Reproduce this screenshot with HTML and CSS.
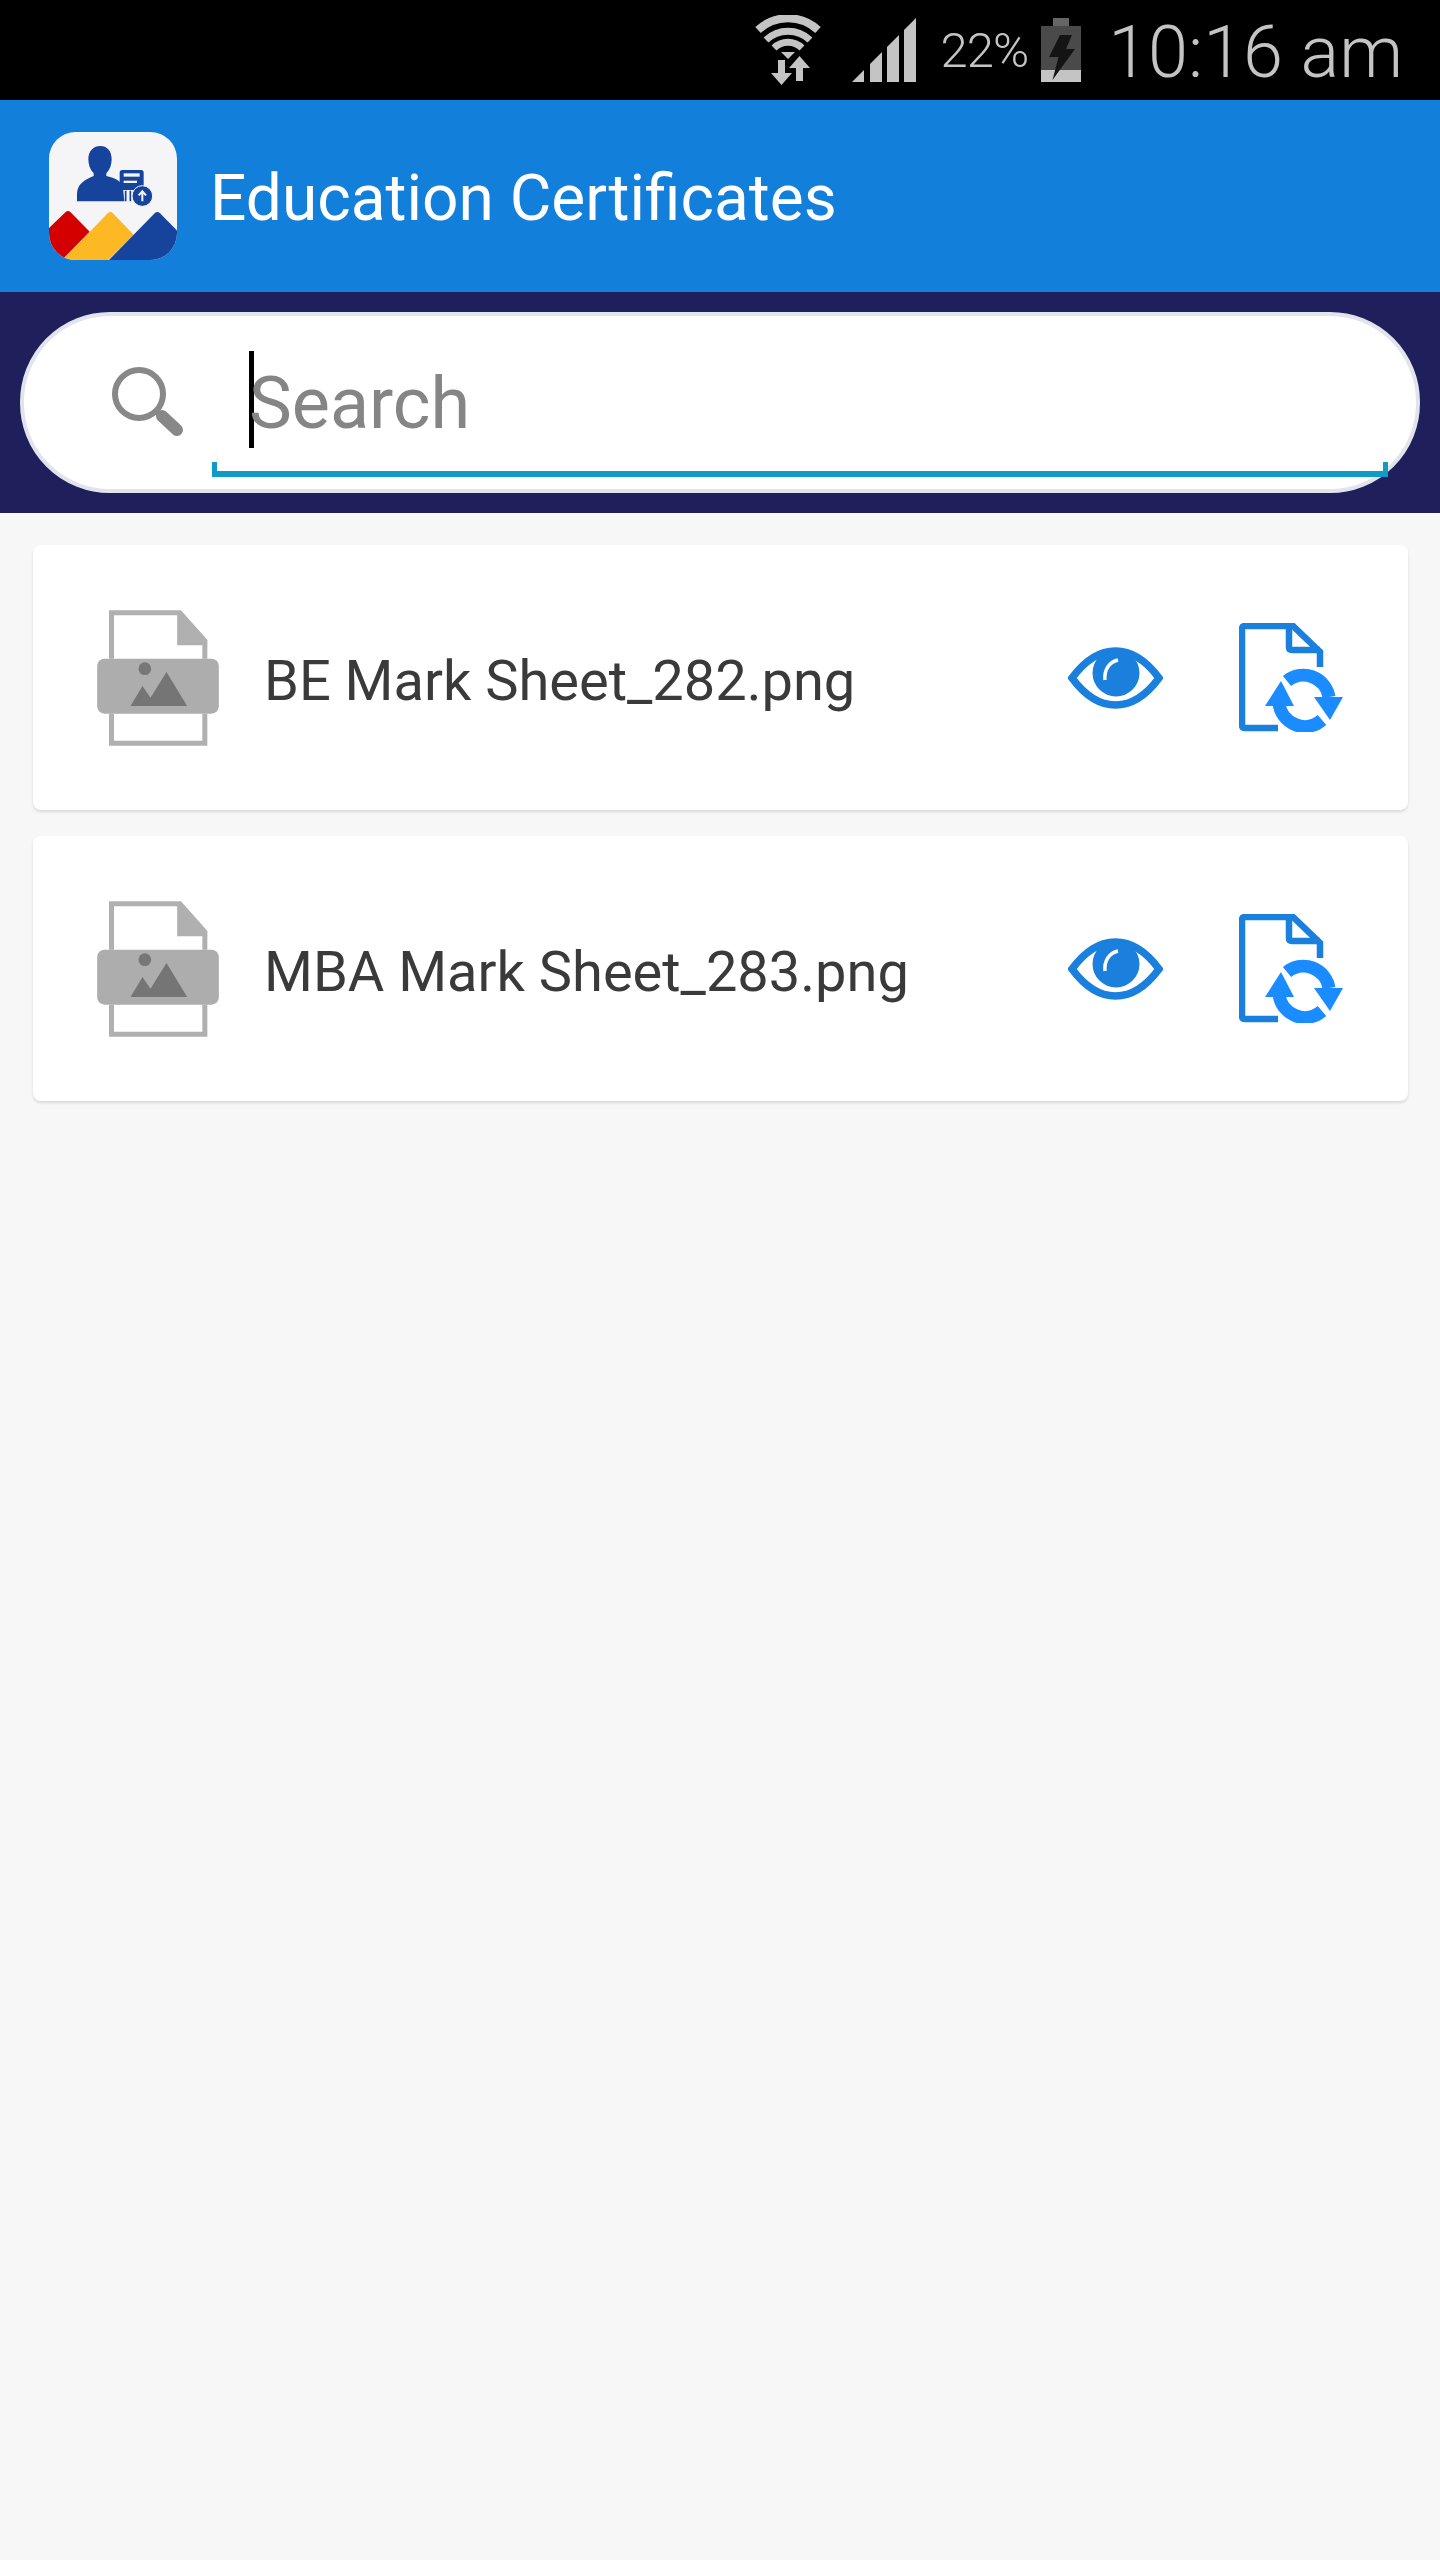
FILE: index.html
```html
<!DOCTYPE html>
<html>
    <head>
        <meta charset="UTF-8">
        <title>Education Certificates</title>
        <link rel="stylesheet" href="styles.css">
    </head>
    <body>
        <div class="statusbar">
            <svg class="wifi" viewBox="0 0 66 70">
                <path d="M3 15 A44 44 0 0 1 63 15" fill="none" stroke="#c4c4c4" stroke-width="8"/>
                <path d="M11 25 A32 32 0 0 1 55 25" fill="none" stroke="#c4c4c4" stroke-width="7"/>
                <path d="M19 33 A20 20 0 0 1 47 33" fill="none" stroke="#c4c4c4" stroke-width="7"/>
                <polygon points="26,37 40,37 33,44" fill="#c4c4c4"/>
                <path d="M23 45 H30 V58 H37 L26.500 70 L16 58 H23 Z" fill="#c4c4c4"/>
                <path d="M41 66 H48 V53 H55 L44.500 41 L34 53 H41 Z" fill="#c4c4c4"/>
            </svg>
            <svg class="signal" viewBox="0 0 64 64">
                <polygon points="0,64 12,52 12,64" fill="#c4c4c4"/>
                <polygon points="18,46 30,34 30,64 18,64" fill="#c4c4c4"/>
                <polygon points="35,29 47,17 47,64 35,64" fill="#c4c4c4"/>
                <polygon points="52,12 64,0 64,64 52,64" fill="#c4c4c4"/>
            </svg>
            <span class="battery-text">22%</span>
            <svg class="battery" viewBox="0 0 40 64">
                <rect x="12" y="0" width="16" height="8" fill="#666"/>
                <rect x="0" y="8" width="40" height="44" fill="#4a4a4a"/>
                <rect x="0" y="52" width="40" height="12" fill="#c4c4c4"/>
                <polygon points="19,17 31,17 25,31 34,31 11.500,62 17.500,39 8,39" fill="#141414"/>
            </svg>
            <span class="time">10:16 am</span>
        </div>

        <div class="appbar">
            <svg class="logo" viewBox="58 36 384 384">
                <clipPath id="logoClip"><rect x="58" y="36" width="384" height="384" rx="80"/></clipPath>
                <g clip-path="url(#logoClip)">
                    <rect x="58" y="36" width="384" height="384" fill="#f5f5f7"/>
                    <path d="M50 332 L108 276 Q115 270 122 276 L180 335 L105 412 L90 430 L50 430 Z" fill="#d40000"/>
                    <path d="M105 414 L234 280 Q242 272 250 280 L312 344 L232 424 L100 424 Z" fill="#fdb924"/>
                    <path d="M234 424 L375 280 Q383 272 391 280 L450 340 L450 424 Z" fill="#16439b"/>
                    <path d="M176 118 C176 92 192 78 212 78 C232 78 246 92 246 118 C246 135 240 150 230 160 L230 168 C252 174 276 180 280 205 L284 244 H142 L142 220 C144 190 168 178 192 168 L192 160 C182 150 176 135 176 118 Z" fill="#16439b"/>
                    <rect x="270" y="150" width="72" height="60" rx="8" fill="#16439b"/>
                    <rect x="282" y="160" width="48" height="10" fill="#f5f5f7"/>
                    <rect x="282" y="182" width="40" height="7" fill="#f5f5f7"/>
                    <path d="M288 212 V244 M302 212 V244" stroke="#16439b" stroke-width="5"/>
                    <circle cx="338" cy="228" r="31" fill="#16439b" stroke="#f5f5f7" stroke-width="3"/>
                    <path d="M338 244 V216 M327 226 L338 214 L349 226" fill="none" stroke="#f5f5f7" stroke-width="6"/>
                </g>
            </svg>
            <span class="appbar-title">Education Certificates</span>
        </div>

        <div class="searchbar">
            <div class="searchbox">
                <svg class="search-icon" viewBox="0 0 72 72">
                    <circle cx="27" cy="27" r="24" fill="none" stroke="#888" stroke-width="6"/>
                    <path d="M43 43 L50 50" stroke="#888" stroke-width="6"/>
                    <path d="M50 49 L65 63" stroke="#888" stroke-width="12" stroke-linecap="round"/>
                </svg>
                <div class="search-field">
                    <span class="caret"></span>
                    <span class="placeholder">Search</span>
                </div>
            </div>
        </div>

        <div class="list">
            <div class="card">
                <svg class="file-icon" viewBox="232 242 365 408">
                    <path d="M275 388 V250 H480 L555 335 V388 M555 553 V642 H275 V553" fill="none" stroke="#b0b0b0" stroke-width="15"/>
                    <path d="M472 246 H484 L562 332 V348 H472 Z" fill="#b0b0b0"/>
                    <rect x="232" y="388" width="365" height="165" rx="22" fill="#adadad"/>
                    <circle cx="375" cy="418" r="19" fill="#777"/>
                    <path d="M332 530 L368 470 L392 505 L440 428 L502 530 Z" fill="#757575"/>
                </svg>
                <span class="file-name">BE Mark Sheet_282.png</span>
                <svg class="eye-icon" viewBox="0 0 95 62">
                    <path d="M4 31 C18 12 32 4 47.500 4 C63 4 77 12 91 31 C77 50 63 58 47.500 58 C32 58 18 50 4 31 Z" fill="none" stroke="#1a7fdd" stroke-width="7.500"/>
                    <circle cx="48" cy="26" r="23.500" fill="#1a7fdd"/>
                    <path d="M37 33 C36 23 41 15 50 13" fill="none" stroke="#fff" stroke-width="3.500"/>
                </svg>
                <svg class="doc-icon" viewBox="0 0 104 109">
                    <path d="M39 105 H6 Q3 105 3 102 V6 Q3 3 6 3 H54 L81 29 V44" fill="none" stroke="#1a7fdd" stroke-width="6.500"/>
                    <path d="M50 3 V24 Q50 27 53 27 H81" fill="none" stroke="#1a7fdd" stroke-width="6.500"/>
                    <path d="M48 58 A26 26 0 0 1 90 74" fill="none" stroke="#1a8cff" stroke-width="13"/>
                    <polygon points="75,74 104,74 91,97" fill="#1a8cff"/>
                    <path d="M83 97 A26 26 0 0 1 40 80" fill="none" stroke="#1a8cff" stroke-width="13"/>
                    <polygon points="26,83 55,83 42,58" fill="#1a8cff"/>
                </svg>
            </div>
            <div class="card">
                <svg class="file-icon" viewBox="232 242 365 408">
                    <path d="M275 388 V250 H480 L555 335 V388 M555 553 V642 H275 V553" fill="none" stroke="#b0b0b0" stroke-width="15"/>
                    <path d="M472 246 H484 L562 332 V348 H472 Z" fill="#b0b0b0"/>
                    <rect x="232" y="388" width="365" height="165" rx="22" fill="#adadad"/>
                    <circle cx="375" cy="418" r="19" fill="#777"/>
                    <path d="M332 530 L368 470 L392 505 L440 428 L502 530 Z" fill="#757575"/>
                </svg>
                <span class="file-name">MBA Mark Sheet_283.png</span>
                <svg class="eye-icon" viewBox="0 0 95 62">
                    <path d="M4 31 C18 12 32 4 47.500 4 C63 4 77 12 91 31 C77 50 63 58 47.500 58 C32 58 18 50 4 31 Z" fill="none" stroke="#1a7fdd" stroke-width="7.500"/>
                    <circle cx="48" cy="26" r="23.500" fill="#1a7fdd"/>
                    <path d="M37 33 C36 23 41 15 50 13" fill="none" stroke="#fff" stroke-width="3.500"/>
                </svg>
                <svg class="doc-icon" viewBox="0 0 104 109">
                    <path d="M39 105 H6 Q3 105 3 102 V6 Q3 3 6 3 H54 L81 29 V44" fill="none" stroke="#1a7fdd" stroke-width="6.500"/>
                    <path d="M50 3 V24 Q50 27 53 27 H81" fill="none" stroke="#1a7fdd" stroke-width="6.500"/>
                    <path d="M48 58 A26 26 0 0 1 90 74" fill="none" stroke="#1a8cff" stroke-width="13"/>
                    <polygon points="75,74 104,74 91,97" fill="#1a8cff"/>
                    <path d="M83 97 A26 26 0 0 1 40 80" fill="none" stroke="#1a8cff" stroke-width="13"/>
                    <polygon points="26,83 55,83 42,58" fill="#1a8cff"/>
                </svg>
            </div>
        </div>
    </body>
</html>
```

FILE: styles.css
```css
body {
    margin: 0;
    min-height: 2560px;
    background-color: #f7f7f7;
    font-family: Roboto, "Liberation Sans", sans-serif;
}
svg {
    filter: blur(0.6px);
}
.statusbar {
    display: flex;
    align-items: center;
    justify-content: flex-end;
    height: 100px;
    padding-right: 37px;
    background-color: #000;
    color: #c4c4c4;
    font-weight: 300;
}
.wifi {
    width: 66px;
    height: 70px;
    margin-right: 31px;
}
.signal {
    width: 64px;
    height: 64px;
    margin-right: 25px;
}
.battery-text {
    margin-right: 13px;
    font-size: 49px;
    letter-spacing: -1px;
}
.battery {
    width: 40px;
    height: 64px;
    margin-right: 27px;
}
.time {
    margin-top: 5px;
    font-size: 72px;
}
.appbar {
    display: flex;
    align-items: center;
    height: 192px;
    padding-left: 49px;
    background-color: #127fdb;
}
.logo {
    width: 128px;
    height: 128px;
    margin-right: 33px;
}
.appbar-title {
    margin-top: 5px;
    color: #fff;
    font-size: 64px;
}
.searchbar {
    height: 221px;
    padding: 20px;
    box-sizing: border-box;
    background-color: #1f1f5c;
}
.searchbox {
    display: flex;
    height: 181px;
    padding: 0 28px 12px 88px;
    box-sizing: border-box;
    border: 4px solid #e1e4ea;
    border-radius: 90px;
    background-color: #fff;
}
.search-icon {
    align-self: center;
    width: 72px;
    height: 72px;
    margin-top: 12px;
    margin-right: 28px;
}
.search-field {
    position: relative;
    flex: 1;
    display: flex;
    align-items: flex-start;
    padding: 35px 0 0 37px;
    border-bottom: 6px solid #0e9cc6;
}
.search-field::before,
.search-field::after {
    content: "";
    position: absolute;
    bottom: 0;
    width: 5px;
    height: 9px;
    background-color: #0e9cc6;
}
.search-field::before {
    left: 0;
}
.search-field::after {
    right: 0;
}
.caret {
    width: 5px;
    height: 97px;
    margin-right: -5px;
    background-color: #000;
}
.placeholder {
    color: #858585;
    font-size: 72px;
    line-height: 97px;
    margin-top: 4px;
}
.list {
    display: flex;
    flex-direction: column;
    gap: 26px;
    padding: 32px 32px 0 33px;
}
.card {
    display: flex;
    align-items: center;
    height: 265px;
    padding: 0 65px 0 64px;
    border-radius: 8px;
    background-color: #fff;
    box-shadow: 0 2px 3px rgba(0, 0, 0, 0.12);
}
.file-icon {
    width: 122px;
    height: 136px;
    margin-right: 45px;
}
.file-name {
    flex: 1;
    margin-top: 6px;
    color: #3a3a3a;
    font-size: 56px;
}
.eye-icon {
    width: 95px;
    height: 62px;
    margin-right: 76px;
}
.doc-icon {
    width: 104px;
    height: 109px;
}
```
